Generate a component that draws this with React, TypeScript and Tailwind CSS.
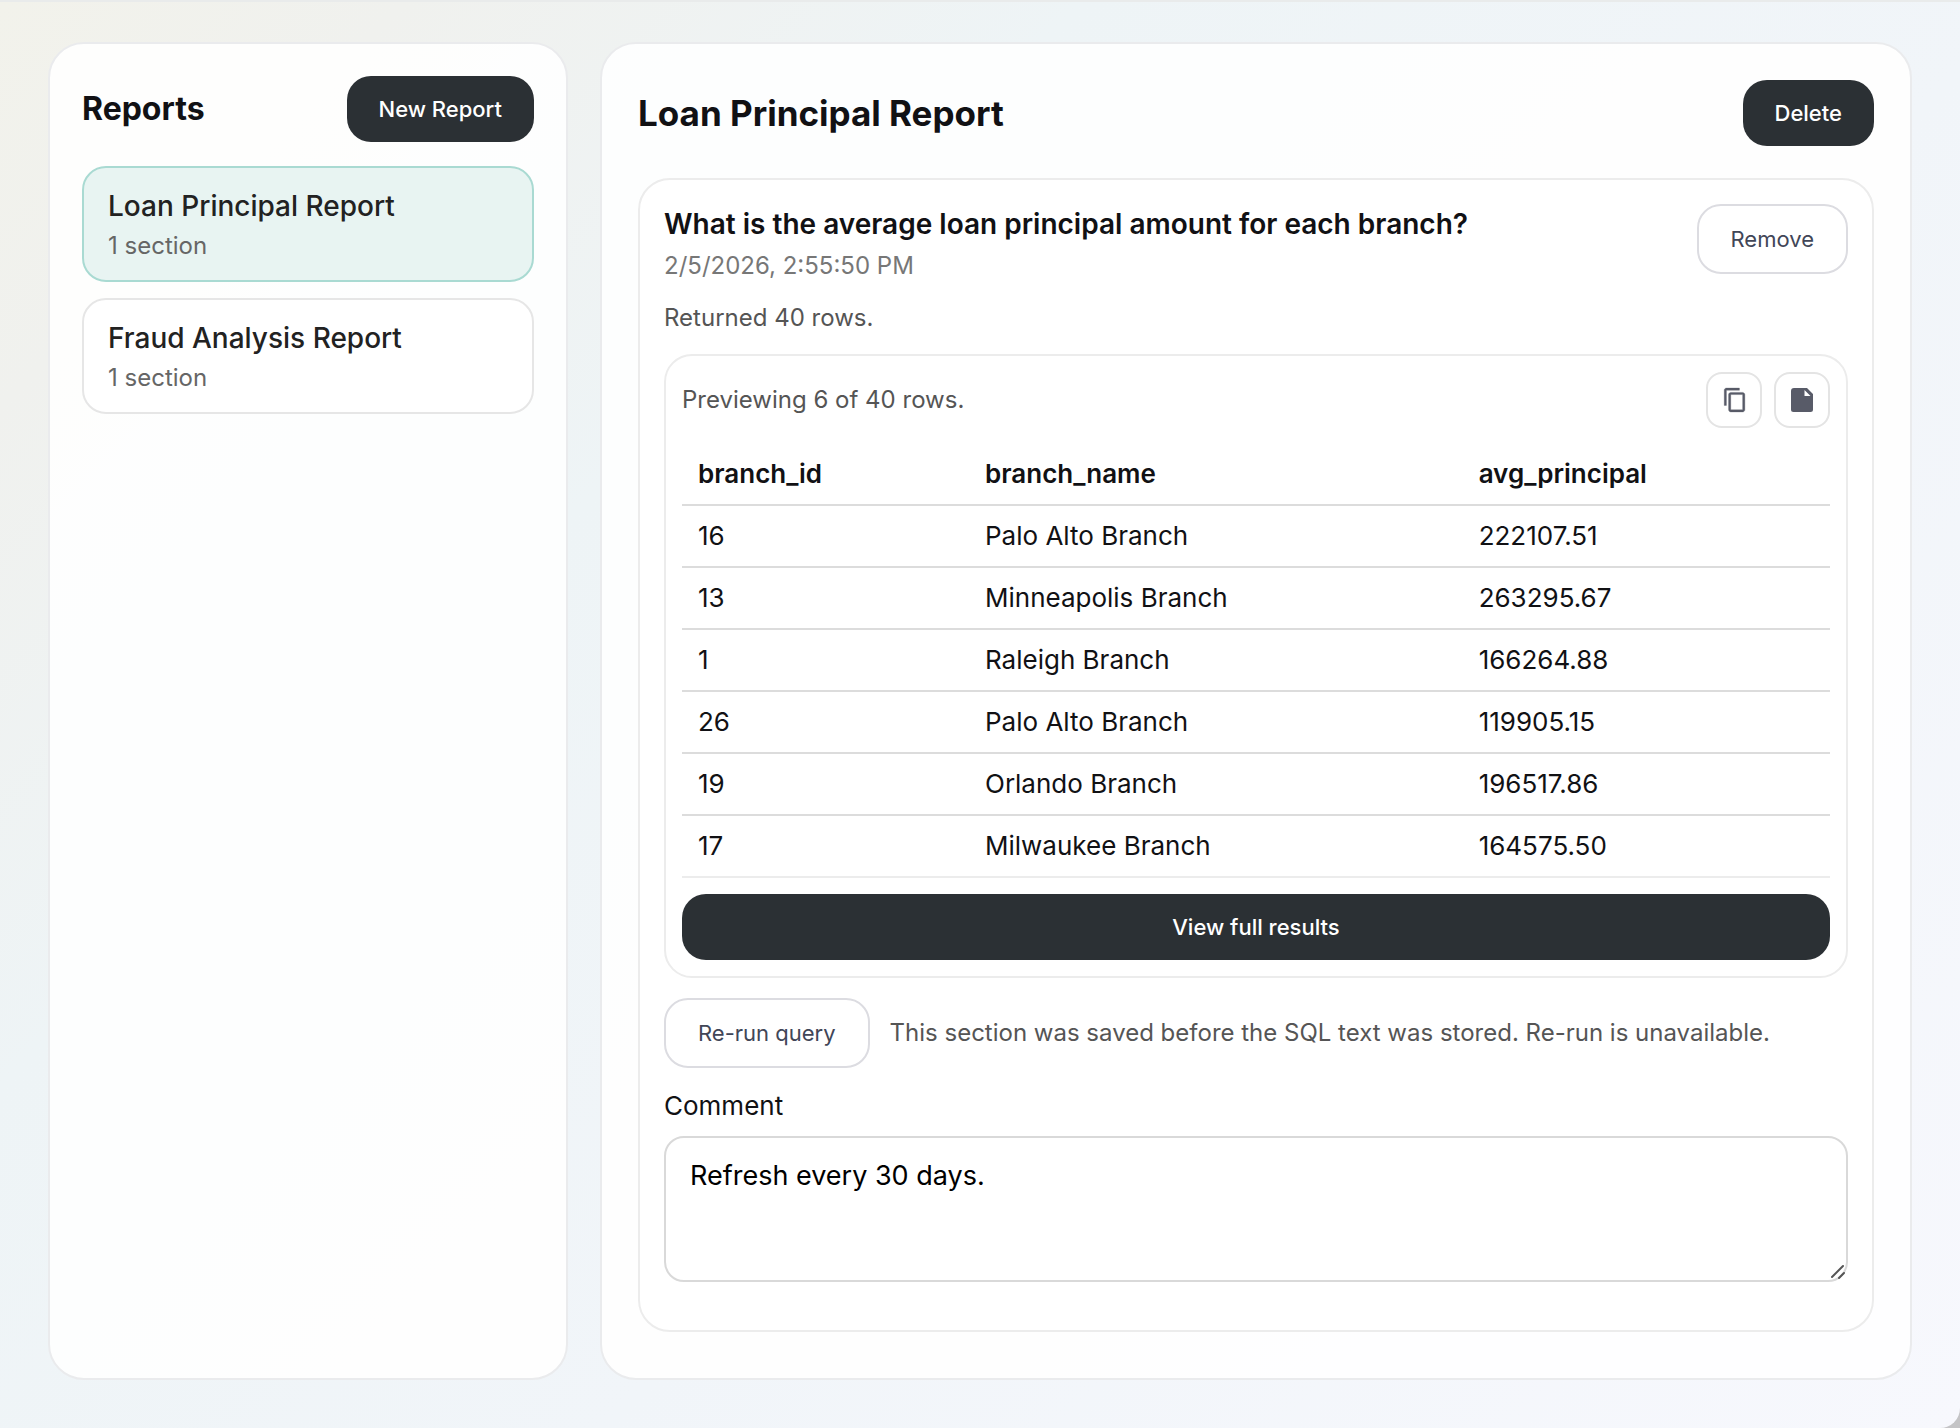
import React from 'react';
import clsx from 'clsx';

interface Report {
  id: string;
  title: string;
  sections: number;
}

interface BranchRow {
  branch_id: string;
  branch_name: string;
  avg_principal: string;
}

const reports: Report[] = [
  { id: 'loan', title: 'Loan Principal Report', sections: 1 },
  { id: 'fraud', title: 'Fraud Analysis Report', sections: 1 },
];

const rows: BranchRow[] = [
  { branch_id: '16', branch_name: 'Palo Alto Branch', avg_principal: '222107.51' },
  { branch_id: '13', branch_name: 'Minneapolis Branch', avg_principal: '263295.67' },
  { branch_id: '1', branch_name: 'Raleigh Branch', avg_principal: '166264.88' },
  { branch_id: '26', branch_name: 'Palo Alto Branch', avg_principal: '119905.15' },
  { branch_id: '19', branch_name: 'Orlando Branch', avg_principal: '196517.86' },
  { branch_id: '17', branch_name: 'Milwaukee Branch', avg_principal: '164575.50' },
];

const CopyIcon = () => (
  <svg viewBox="-1 0 24 24" className="size-[26px]" fill="currentColor" stroke="currentColor" strokeWidth="0.3">
    <path d="M16 1H4c-1.100 0-2 .9-2 2v14h2V3h12V1zm3 4H8c-1.100 0-2 .9-2 2v14c0 1.100.9 2 2 2h11c1.100 0 2-.9 2-2V7c0-1.100-.9-2-2-2zm0 16H8V7h11v14z" />
  </svg>
);

const FileIcon = () => (
  <svg viewBox="0 0 22 24" className="w-[22px] h-6" fill="currentColor">
    <path
      fillRule="evenodd"
      d="M3 0H16L22 6V21.500A2.500 2.500 0 0 1 19.500 24H2.500A2.500 2.500 0 0 1 0 21.500V3A3 3 0 0 1 3 0ZM13.500 2V8H19.500Z"
    />
  </svg>
);

const ResizeGrip = () => (
  <svg
    viewBox="0 0 16 16"
    className="pointer-events-none absolute right-0.5 bottom-0.5 size-4"
    stroke="#555"
    strokeWidth="2"
    strokeLinecap="round"
    aria-hidden="true"
  >
    <path d="M2 13L13 2M9 14L14 9" />
  </svg>
);

interface ButtonProps {
  children: React.ReactNode;
  variant?: 'solid' | 'outline';
  className?: string;
}

const Button: React.FC<ButtonProps> = ({ children, variant = 'solid', className }) => (
  <button
    type="button"
    className={clsx(
      'shrink-0 rounded-3xl px-8 py-5 text-[22px] leading-[26px]',
      variant === 'solid' ? 'bg-[#2b3034] font-medium text-white' : 'border-2 border-[#dcdce1] bg-white text-[#414657]',
      className,
    )}
  >
    {children}
  </button>
);

const IconButton: React.FC<{ label: string; children: React.ReactNode }> = ({ label, children }) => (
  <button
    type="button"
    aria-label={label}
    className="flex size-14 items-center justify-center rounded-2xl border-2 border-[#e4e4e4] bg-white text-[#585b68]"
  >
    {children}
  </button>
);

const Sidebar: React.FC<{ activeId: string; onSelect: (id: string) => void }> = ({ activeId, onSelect }) => (
  <aside className="w-[520px] shrink-0 rounded-[36px] border-2 border-[#eaebed] bg-white/90 p-8">
    <div className="mb-6 flex items-center justify-between">
      <h2 className="text-[32px] leading-10 font-bold">Reports</h2>
      <Button>New Report</Button>
    </div>
    <div className="flex flex-col gap-4">
      {reports.map((report) => (
        <button
          key={report.id}
          type="button"
          onClick={() => onSelect(report.id)}
          className={clsx(
            'rounded-3xl border-2 px-6 pt-5 pb-4 text-left',
            activeId === report.id ? 'border-[#a9dad2] bg-[#e8f4f2]' : 'border-[#e6e6e6] bg-white',
          )}
        >
          <span className="block text-[28px] leading-9 font-medium text-[#222]">{report.title}</span>
          <span className="mt-1 block text-2xl leading-9 text-[#666]">{report.sections} section</span>
        </button>
      ))}
    </div>
  </aside>
);

const ResultsPreview = () => (
  <div className="mt-[18px] rounded-[28px] border-2 border-[#ececec] bg-white p-4">
    <div className="mb-4 flex items-center justify-between">
      <p className="text-2xl text-[#555]">Previewing 6 of 40 rows.</p>
      <div className="flex gap-3">
        <IconButton label="Copy">
          <CopyIcon />
        </IconButton>
        <IconButton label="Export">
          <FileIcon />
        </IconButton>
      </div>
    </div>
    <table className="w-full border-separate border-spacing-0 text-left text-[26px] leading-9">
      <thead>
        <tr>
          <th className="w-1/4 border-b-2 border-[#dcdcdc] px-4 py-3 font-semibold">branch_id</th>
          <th className="w-[43%] border-b-2 border-[#dcdcdc] px-4 py-3 font-semibold">branch_name</th>
          <th className="border-b-2 border-[#dcdcdc] px-4 py-3 font-semibold">avg_principal</th>
        </tr>
      </thead>
      <tbody className="[&>tr:last-child>td]:border-[#ececec]">
        {rows.map((row) => (
          <tr key={row.branch_id}>
            <td className="border-b-2 border-[#dcdcdc] px-4 py-3">{row.branch_id}</td>
            <td className="border-b-2 border-[#dcdcdc] px-4 py-3">{row.branch_name}</td>
            <td className="border-b-2 border-[#dcdcdc] px-4 py-3">{row.avg_principal}</td>
          </tr>
        ))}
      </tbody>
    </table>
    <Button className="mt-4 w-full">View full results</Button>
  </div>
);

const App: React.FC = () => {
  const [activeId, setActiveId] = React.useState('loan');
  const [comment, setComment] = React.useState('Refresh every 30 days.');

  return (
    <div className="bg-[#c4c4c6] font-[Inter,sans-serif] text-[#111114]">
      <div className="flex min-h-screen flex-col rounded-br-[20px] border-t-2 border-[#e9ebeb] bg-linear-[135deg,#f2f2eb_0%,#f0f1ee_12%,#eef4f6_32%,#f1f5f9_60%,#f7f8fd_100%]">
        <main className="flex grow gap-8 px-12 pt-10 pb-12">
          <Sidebar activeId={activeId} onSelect={setActiveId} />
          <section className="min-w-0 grow rounded-[36px] border-2 border-[#eaebed] bg-white/90 p-9">
            <div className="mb-8 flex items-center justify-between">
              <h1 className="text-[35px] leading-10 font-bold">Loan Principal Report</h1>
              <Button>Delete</Button>
            </div>
            <article className="rounded-[32px] border-2 border-[#ececec] bg-white px-6 pt-6 pb-12">
              <div className="flex items-start justify-between">
                <div>
                  <h3 className="text-[28px] leading-10 font-semibold">
                    What is the average loan principal amount for each branch?
                  </h3>
                  <p className="mt-1 text-2xl leading-9 text-[#777]">2/5/2026, 2:55:50 PM</p>
                </div>
                <Button variant="outline">Remove</Button>
              </div>
              <p className="mt-4 text-2xl leading-9 text-[#555]">Returned 40 rows.</p>
              <ResultsPreview />
              <div className="mt-5 flex items-center gap-5">
                <Button variant="outline">Re-run query</Button>
                <p className="text-2xl text-[#555]">
                  This section was saved before the SQL text was stored. Re-run is unavailable.
                </p>
              </div>
              <label htmlFor="comment" className="mt-5 mb-3 block text-[26px] leading-9">
                Comment
              </label>
              <div className="relative">
                <textarea
                  id="comment"
                  value={comment}
                  onChange={(e) => setComment(e.target.value)}
                  className="block h-[146px] w-full resize-none rounded-[20px] border-2 border-[#d9d9d9] bg-white px-6 py-5 text-[27px] leading-9 text-black"
                />
                <ResizeGrip />
              </div>
            </article>
          </section>
        </main>
      </div>
    </div>
  );
};

export default App;
